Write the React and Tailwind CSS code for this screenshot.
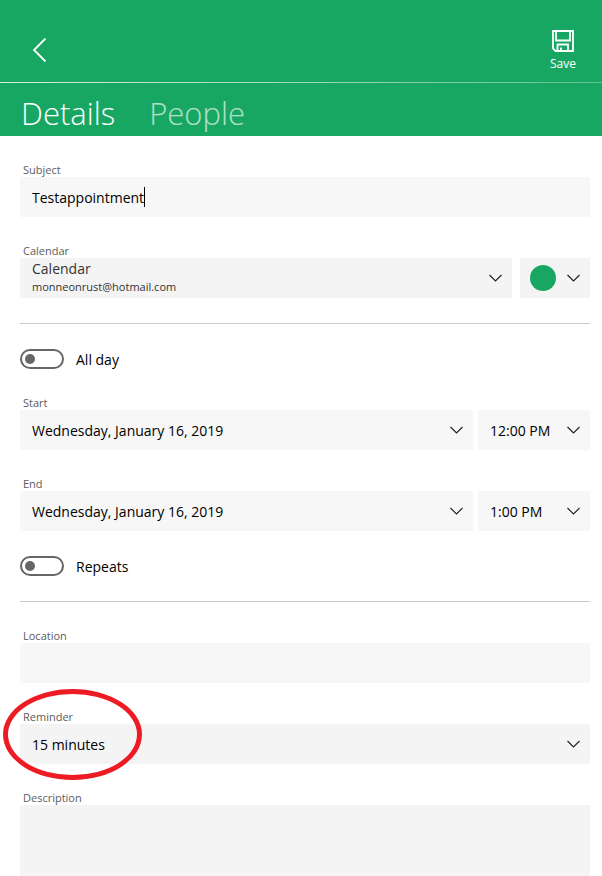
import React, { useState } from "react";

const Chevron = () => (
  <svg
    className="pointer-events-none col-start-1 row-start-1 mr-2.5 self-center justify-self-end"
    width="13"
    height="8"
    viewBox="0 0 13 8"
    fill="none"
    stroke="#1f1f1f"
    strokeWidth="1.1"
  >
    <path d="M0.5 1 L6.5 7 L12.5 1" />
  </svg>
);

const Label = ({ htmlFor, children }) => (
  <label htmlFor={htmlFor} className="block h-4 pl-[3px] pt-px text-[11px] leading-4 text-[#5c5c5c]">
    {children}
  </label>
);

const Select = ({ id, label, value, onChange, options, className }) => (
  <div className={`grid h-10 ${className}`}>
    <select
      id={id}
      aria-label={label}
      value={value}
      onChange={e => onChange(e.target.value)}
      className="col-start-1 row-start-1 w-full appearance-none bg-transparent pl-3 pr-7 pt-0.5 text-sm text-black outline-none"
    >
      {options.map(o => (
        <option key={o} value={o}>{o}</option>
      ))}
    </select>
    <Chevron />
  </div>
);

const Toggle = ({ id, label, checked, onChange }) => (
  <div className="flex h-5 items-center gap-3">
    <input
      id={id}
      type="checkbox"
      role="switch"
      checked={checked}
      onChange={e => onChange(e.target.checked)}
      className="flex h-5 w-11 appearance-none items-center rounded-full border-2 border-[#666666] px-[3px] before:size-2.5 before:rounded-full before:bg-[#666666] checked:justify-end checked:border-[#18a763] checked:bg-[#18a763] checked:before:bg-white"
    />
    <label htmlFor={id} className="pt-0.5 text-sm text-black">{label}</label>
  </div>
);

const DateRow = ({ id, label, date, setDate, time, setTime, times }) => (
  <div>
    <Label htmlFor={id}>{label}</Label>
    <div className="flex gap-[5px]">
      <Select
        id={id}
        value={date}
        onChange={setDate}
        options={["Wednesday, January 16, 2019", "Thursday, January 17, 2019"]}
        className="flex-1 bg-[#f7f7f7]"
      />
      <Select
        label={`${label} time`}
        value={time}
        onChange={setTime}
        options={times}
        className="w-28 bg-[#f7f7f7]"
      />
    </div>
  </div>
);

const App = () => {
  const [subject, setSubject] = useState("Testappointment");
  const [calendar, setCalendar] = useState("Calendar");
  const [allDay, setAllDay] = useState(false);
  const [repeats, setRepeats] = useState(false);
  const [startDate, setStartDate] = useState("Wednesday, January 16, 2019");
  const [startTime, setStartTime] = useState("12:00 PM");
  const [endDate, setEndDate] = useState("Wednesday, January 16, 2019");
  const [endTime, setEndTime] = useState("1:00 PM");
  const [location, setLocation] = useState("");
  const [reminder, setReminder] = useState("15 minutes");
  const [description, setDescription] = useState("");

  return (
    <div className="flex min-h-screen flex-col bg-white font-['Open_Sans','Noto_Sans',sans-serif]">
      <header className="bg-[#18a763] text-white">
        <div className="flex h-[82px] items-end justify-between pl-8 pr-[26px]">
          <button type="button" aria-label="Back" className="pb-5">
            <svg width="16" height="24" viewBox="0 0 16 24" fill="none" stroke="currentColor" strokeWidth="1.8">
              <path d="M13.5 0.5 L2 12 L13.5 23.5" />
            </svg>
          </button>
          <button type="button" className="flex flex-col items-center gap-1 pb-2.5 text-xs leading-4">
            <svg width="22" height="22" viewBox="0 0 22 22" fill="none" stroke="currentColor" strokeWidth="1.8">
              <path d="M1 1 H21 V21 H3.5 L1 18.5 Z" />
              <path d="M4 1 V10.5 H18 V1" />
              <path d="M5.5 21 V14.5 H16 V21" />
              <path d="M9 21 V17.5" />
            </svg>
            Save
          </button>
        </div>
        <div className="h-px bg-linear-to-r from-[#d5efe2] to-[#5fc293]" />
        <nav className="flex h-[53px] items-end gap-[34px] pb-[3px] pl-[21px] text-[31px] leading-10 font-light">
          <a href="#details" className="text-white">Details</a>
          <a href="#people" className="text-white/65">People</a>
        </nav>
      </header>

      <main className="flex flex-1 flex-col gap-[25px] pl-5 pr-3 pt-[25px]">
        <div>
          <Label htmlFor="subject">Subject</Label>
          <div className="flex h-10 items-center bg-[#f7f7f7] pl-3">
            <input
              id="subject"
              type="text"
              value={subject}
              onChange={e => setSubject(e.target.value)}
              className="field-sizing-content bg-transparent pt-0.5 text-sm text-black caret-transparent outline-none"
            />
            <span className="h-5 w-px bg-black" />
          </div>
        </div>

        <div>
          <Label htmlFor="calendar">Calendar</Label>
          <div className="flex gap-2">
            <div className="grid h-10 flex-1 bg-[#f4f4f4]">
              <select
                id="calendar"
                value={calendar}
                onChange={e => setCalendar(e.target.value)}
                className="col-start-1 row-start-1 w-full appearance-none bg-transparent pb-[18px] pl-3 pr-7 text-sm text-[#333333] outline-none"
              >
                <option>Calendar</option>
              </select>
              <span className="pointer-events-none col-start-1 row-start-1 self-end pb-[3px] pl-3 text-[11px] leading-4 text-[#333333]">
                monneonrust@hotmail.com
              </span>
              <Chevron />
            </div>
            <button type="button" aria-label="Calendar color" aria-haspopup="listbox" className="grid h-10 w-[70px] bg-[#f4f4f4]">
              <span className="col-start-1 row-start-1 ml-2.5 size-[26px] self-center rounded-full bg-[#18a763]" />
              <Chevron />
            </button>
          </div>
        </div>

        <hr className="border-[#cccccc]" />

        <Toggle id="all-day" label="All day" checked={allDay} onChange={setAllDay} />

        <DateRow
          id="start"
          label="Start"
          date={startDate}
          setDate={setStartDate}
          time={startTime}
          setTime={setStartTime}
          times={["12:00 PM", "12:30 PM"]}
        />
        <DateRow
          id="end"
          label="End"
          date={endDate}
          setDate={setEndDate}
          time={endTime}
          setTime={setEndTime}
          times={["1:00 PM", "1:30 PM"]}
        />

        <Toggle id="repeats" label="Repeats" checked={repeats} onChange={setRepeats} />

        <hr className="border-[#cccccc]" />

        <div>
          <Label htmlFor="location">Location</Label>
          <input
            id="location"
            type="text"
            value={location}
            onChange={e => setLocation(e.target.value)}
            className="block h-10 w-full bg-[#f7f7f7] px-3 text-sm outline-none"
          />
        </div>

        <div className="relative">
          <Label htmlFor="reminder">Reminder</Label>
          <Select
            id="reminder"
            value={reminder}
            onChange={setReminder}
            options={["None", "15 minutes", "30 minutes", "1 hour"]}
            className="bg-[#f4f4f4]"
          />
          {/* red marker around the reminder setting */}
          <div className="pointer-events-none absolute -left-[17px] -top-[19px] h-[91px] w-[139px] rounded-[50%] border-5 border-[#ed1c24]" />
        </div>

        <div className="flex flex-1 flex-col">
          <Label htmlFor="description">Description</Label>
          <textarea
            id="description"
            value={description}
            onChange={e => setDescription(e.target.value)}
            className="w-full flex-1 resize-none bg-[#f4f4f4] px-3 py-2 text-sm outline-none"
          />
        </div>
      </main>
    </div>
  );
};

export default App;
